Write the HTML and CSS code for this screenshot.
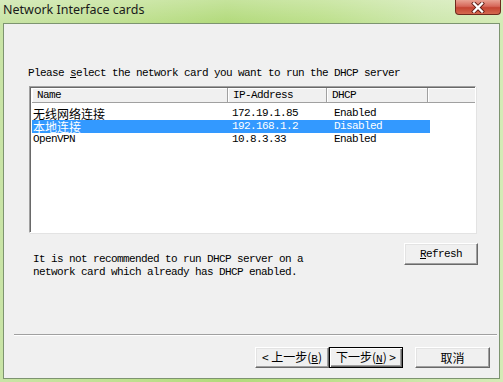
FILE: index.html
```html
<!DOCTYPE html>
<html lang="zh-CN">
<head>
    <meta charset="UTF-8">
    <title>Network Interface cards</title>
    <link rel="stylesheet" href="styles.css">
</head>
<body>
    <div class="window">
        <div class="titlebar">
            <span class="title">Network Interface cards</span>
            <span class="close-btn">
                <svg width="14" height="11" viewBox="0 0 14 11">
                    <path d="M3 1.5 L11 9.5 M11 1.5 L3 9.5" stroke="#5a1a12" stroke-width="4" stroke-linecap="square"/>
                    <path d="M3 1.5 L11 9.5 M11 1.5 L3 9.5" stroke="#ffffff" stroke-width="2.4" stroke-linecap="square"/>
                </svg>
            </span>
        </div>

        <div class="client">
            <p class="prompt">Please <u>s</u>elect the network card you want to run the DHCP server</p>

            <div class="listbox">
                <div class="list-header">
                    <span class="col col-name">Name</span>
                    <span class="col col-ip">IP-Address</span>
                    <span class="col col-dhcp">DHCP</span>
                    <span class="col col-rest"></span>
                </div>
                <div class="list-body">
                    <div class="list-row">
                        <span class="cell col-name cjk">无线网络连接</span>
                        <span class="cell col-ip">172.19.1.85</span>
                        <span class="cell col-dhcp">Enabled</span>
                    </div>
                    <div class="list-row selected">
                        <span class="cell col-name cjk">本地连接</span>
                        <span class="cell col-ip">192.168.1.2</span>
                        <span class="cell col-dhcp">Disabled</span>
                    </div>
                    <div class="list-row">
                        <span class="cell col-name">OpenVPN</span>
                        <span class="cell col-ip">10.8.3.33</span>
                        <span class="cell col-dhcp">Enabled</span>
                    </div>
                </div>
            </div>

            <div class="note-row">
                <p class="note">It is not recommended to run DHCP server on a<br>network card which already has DHCP enabled.</p>
                <button class="btn refresh-btn"><u>R</u>efresh</button>
            </div>

            <div class="separator"></div>

            <div class="footer">
                <button class="btn nav-btn cjk">&lt;&nbsp;上一步(<u>B</u>)</button>
                <button class="btn nav-btn default-btn cjk">下一步(<u>N</u>)&nbsp;&gt;</button>
                <button class="btn cancel-btn cjk">取消</button>
            </div>
        </div>
    </div>
</body>
</html>
```

FILE: styles.css
```css
* {
    margin: 0;
    padding: 0;
    box-sizing: border-box;
}

body {
    width: 503px;
    height: 382px;
    overflow: hidden;
    font-family: 'Liberation Mono', 'Noto Sans CJK SC', monospace;
    font-size: 11px;
    letter-spacing: -0.6px;
    color: #000;
}

.cjk {
    font-family: 'Noto Sans CJK SC', sans-serif;
    font-size: 12px;
    letter-spacing: 0;
}

.cjk u {
    font-family: 'Liberation Mono', monospace;
    font-size: 11px;
}

.window {
    width: 503px;
    height: 382px;
    display: flex;
    flex-direction: column;
    background: linear-gradient(90deg, #c9e4a6 0%, #bfe090 25%, #b2da7b 45%, #bde08c 65%, #cde7ac 85%, #d4ebb6 100%);
}

/* barra de titulo */
.titlebar {
    height: 23px;
    flex-shrink: 0;
    display: flex;
    justify-content: space-between;
    align-items: flex-start;
    background: linear-gradient(180deg, rgba(255, 255, 255, 0.25) 0%, rgba(255, 255, 255, 0) 100%);
}

.title {
    font-family: 'Noto Sans', sans-serif;
    font-size: 12.5px;
    letter-spacing: 0;
    color: #1a1a1a;
    padding: 2px 0 0 3px;
    line-height: 16px;
}

.close-btn {
    width: 46px;
    height: 15px;
    margin-right: 2px;
    display: flex;
    align-items: center;
    justify-content: center;
    border: 1px solid #6e2a1e;
    border-top: none;
    border-radius: 0 0 4px 4px;
    background: linear-gradient(180deg, #e9a293 0%, #d6685a 45%, #c44432 55%, #d46a4f 100%);
}

/* area cliente */
.client {
    flex: 1;
    min-height: 0;
    margin: 0 3px 3px 3px;
    border: 1px solid #7d9470;
    background: #f0f0f0;
    display: flex;
    flex-direction: column;
}

.prompt {
    margin: 43px 0 0 24px;
    line-height: 12px;
}

.listbox {
    margin: 7px 0 0 25px;
    width: 447px;
    height: 147px;
    flex-shrink: 0;
    background: #fff;
    border-top: 1px solid #a0a0a0;
    border-left: 1px solid #a0a0a0;
    border-right: 1px solid #fff;
    border-bottom: 1px solid #fff;
    box-shadow: inset 1px 1px 0 #696969, 1px 1px 0 #e3e3e3;
    padding: 1px 0 0 2px;
}

.list-header {
    display: flex;
    height: 15px;
    line-height: 15px;
}

.list-header .col {
    background: #f0f0f0;
    border-right: 1px solid #a0a0a0;
    border-bottom: 1px solid #a0a0a0;
    box-shadow: inset 1px 1px 0 #fff;
    padding-left: 5px;
}

.col-name { width: 196px; }
.col-ip { width: 99px; }
.col-dhcp { width: 101px; }
.col-rest { flex: 1; border-right: none !important; }

.list-body {
    padding-top: 4px;
}

.list-row {
    display: flex;
    height: 13px;
    line-height: 13px;
    width: 398px;
}

.list-row .cell {
    padding-left: 1px;
    white-space: nowrap;
}

.list-row .col-ip {
    padding-left: 4px;
}

.list-row .col-dhcp {
    padding-left: 7px;
}

.list-row .cjk {
    line-height: 13px;
}

.list-row.selected {
    background: #3399ff;
    color: #fff;
}

/* aviso + refresh */
.note-row {
    display: flex;
    justify-content: space-between;
    align-items: flex-start;
    margin: 10px 21px 0 29px;
}

.note {
    margin-top: 10px;
    line-height: 13px;
}

.btn {
    background: #f0f0f0;
    border-top: 1px solid #fff;
    border-left: 1px solid #fff;
    border-right: 1px solid #696969;
    border-bottom: 1px solid #696969;
    box-shadow: inset -1px -1px 0 #a0a0a0, inset 1px 1px 0 #e3e3e3;
    font-family: 'Liberation Mono', monospace;
    font-size: 11px;
    letter-spacing: -0.6px;
    color: #000;
}

.refresh-btn {
    width: 74px;
    height: 22px;
}

.separator {
    margin: 55px 2px 0 10px;
    height: 2px;
    border-top: 1px solid #a0a0a0;
    border-bottom: 1px solid #fff;
}

.footer {
    display: flex;
    justify-content: flex-end;
    margin: 11px 9px 0 0;
}

.footer .btn {
    height: 21px;
    line-height: 17px;
}

.nav-btn {
    width: 74px;
    font-family: 'Noto Sans CJK SC', sans-serif;
    font-size: 12px;
    letter-spacing: 0;
}

.default-btn {
    border: 1px solid #000;
    box-shadow: inset 1px 1px 0 #fff, inset -1px -1px 0 #696969, inset -2px -2px 0 #a0a0a0;
}

.cancel-btn {
    width: 75px;
    margin-left: 12px;
    font-family: 'Noto Sans CJK SC', sans-serif;
    font-size: 12px;
    letter-spacing: 0;
}
```
